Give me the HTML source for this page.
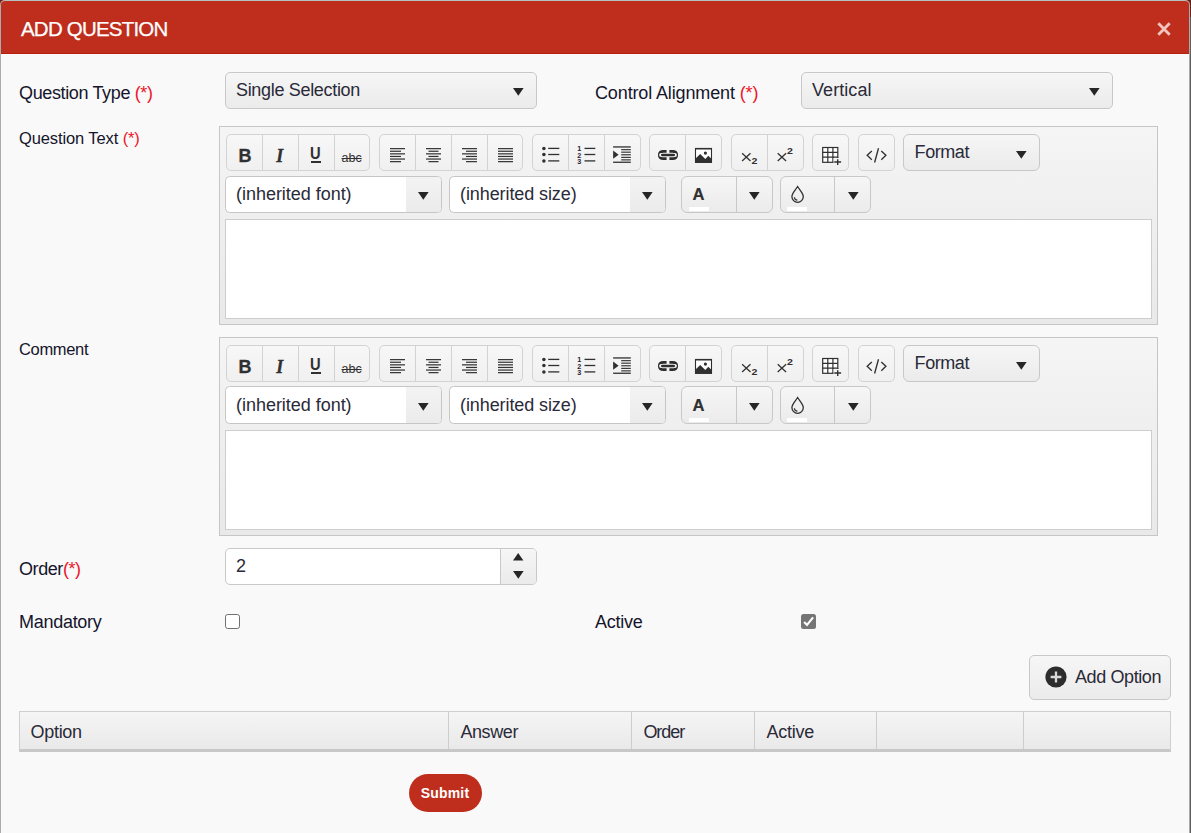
<!DOCTYPE html>
<html lang="en">
<head>
<meta charset="utf-8">
<title>Add Question</title>
<style>#title{letter-spacing:-0.80px}
#qtype{letter-spacing:-0.36px}
#ssel{letter-spacing:-0.32px}
#calign{letter-spacing:-0.13px}
#vert{letter-spacing:0.06px}
#qtext{letter-spacing:-0.11px}
#comment{letter-spacing:-0.33px}
#ifont,#ifont2{letter-spacing:-0.03px}
#isize,#isize2{letter-spacing:-0.09px}
#format,#format2{letter-spacing:-0.44px}
#order{letter-spacing:-0.43px}
#mand{letter-spacing:-0.28px}
#active{letter-spacing:-0.24px}
#addopt{letter-spacing:-0.40px}
#hopt{letter-spacing:-0.32px}
#hans{letter-spacing:-0.40px}
#hord{letter-spacing:-1.05px}
#hact{letter-spacing:-0.24px}
#submit{letter-spacing:0.16px}

*{box-sizing:border-box;margin:0;padding:0}
html,body{width:1191px;height:833px;overflow:hidden;background:linear-gradient(#66221a 17px,#5e5e60 17px);font-family:"Liberation Sans",sans-serif;color:#1b1b2f}
.abs{position:absolute}
#dlg{position:absolute;left:0;top:0;width:1190px;height:840px;background:#f9f9f9;border-radius:5px 5px 0 0;overflow:hidden}
#frame{position:absolute;left:0;top:0;width:1190px;height:840px;border:1px solid #a9abac;border-top-color:#b4c2c4;border-radius:5px 5px 0 0}
#hdr{position:absolute;left:0;top:0;width:1190px;height:54px;background:#bf2e1c;border-bottom:1px solid #b8200d}
#hdr .t{position:absolute;left:21px;top:17px;font-size:20.5px;line-height:24px;color:#fff;white-space:nowrap;-webkit-text-stroke:0.25px #fff}
.lbl{position:absolute;font-size:18px;line-height:22px;white-space:nowrap;color:#15152c}
.lbl.s{font-size:16.5px;line-height:20px}
.req{color:#ee1529}
.sel{position:absolute;height:37px;border:1px solid #c8c8c8;border-radius:5px;background:linear-gradient(#f6f6f6,#ebebeb);font-size:18px;line-height:22px;color:#2a2a38;white-space:nowrap}
.sel .t{position:absolute;left:10px;top:6px}
.dv{position:absolute;top:0;width:1px;height:100%;background:#c8c8c8}
.ed{position:absolute;left:219px;width:939px;height:199px;border:1px solid #c6c6c6;background:linear-gradient(#f5f5f5,#f0efef 45%,#eae9e9)}
.grp{position:absolute;height:37px;border:1px solid #d3d3d3;border-radius:5px;background:linear-gradient(#f7f7f7,#f0f0f0);overflow:hidden}
.grp i{position:absolute;top:0;width:1px;height:35px;background:#d2d2d2}
.tx{position:absolute;color:#303030;white-space:nowrap}
.cmb{position:absolute;height:37px;border:1px solid #c6c6c6;border-radius:4.5px;background:#fff;overflow:hidden;font-size:18px;line-height:22px;color:#2a2a38;white-space:nowrap}
.cmb .t{position:absolute;left:10px;top:6px}
.cmb b{position:absolute;right:0;top:0;width:35px;height:100%;background:linear-gradient(#f3f3f3,#ebebeb)}
.area{position:absolute;width:927px;height:100px;border:1px solid #cdcdcd;background:#fff}
.th{position:absolute;top:0;height:37px;border-left:1px solid #cdcdcd;font-size:18px;line-height:22px;color:#2a2a38;padding:9px 0 0 11.4px;white-space:nowrap}
</style>
</head>
<body>
<div id="dlg">
 <div id="hdr"><div class="t" id="title">ADD QUESTION</div>
  <svg class="abs" style="left:1156.4px;top:21.3px" width="16" height="16" viewBox="0 0 16 16"><path d="M2.3 2.3L13.7 13.7M13.7 2.3L2.3 13.7" stroke="#f2c5bf" stroke-width="2.8" fill="none"/></svg>
 </div>

 <div class="lbl" id="qtype" style="left:19px;top:82px">Question Type <span class="req">(*)</span></div>
 <div class="sel" style="left:225px;top:72px;width:312px"><span class="t" id="ssel">Single Selection</span><svg class="abs" style="left:286.20px;top:13.90px" width="12.6" height="9.8" viewBox="-1 -1 12.6 9.8"><path d="M0 0H10.6L5.3 7.8Z" fill="#262626"/></svg></div>
 <div class="lbl" id="calign" style="left:595px;top:82px">Control Alignment <span class="req">(*)</span></div>
 <div class="sel" style="left:801px;top:72px;width:312px"><span class="t" id="vert">Vertical</span><svg class="abs" style="left:286.20px;top:13.90px" width="12.6" height="9.8" viewBox="-1 -1 12.6 9.8"><path d="M0 0H10.6L5.3 7.8Z" fill="#262626"/></svg></div>

 <div class="lbl s" id="qtext" style="left:19px;top:128px">Question Text <span class="req">(*)</span></div>
 <div class="ed" style="top:126px">
  <div class="grp" style="left:6px;top:7px;width:144px"><i style="left:35px"></i><i style="left:71px"></i><i style="left:107px"></i></div>
  <div class="grp" style="left:159px;top:7px;width:144px"><i style="left:35px"></i><i style="left:71px"></i><i style="left:107px"></i></div>
  <div class="grp" style="left:312px;top:7px;width:109px"><i style="left:35px"></i><i style="left:71px"></i></div>
  <div class="grp" style="left:429px;top:7px;width:73px"><i style="left:35px"></i></div>
  <div class="grp" style="left:511px;top:7px;width:73px"><i style="left:35px"></i></div>
  <div class="grp" style="left:592px;top:7px;width:37px"></div>
  <div class="grp" style="left:638px;top:7px;width:37px"></div>
  <div class="tx" style="left:18.400000000000006px;top:18px;font-weight:bold;font-size:18px;line-height:22px;-webkit-text-stroke:0.3px #303030">B</div>
  <div class="tx" style="left:56.19999999999999px;top:17.599999999999994px;-webkit-text-stroke:0.3px #303030;font-family:'Liberation Serif',serif;font-weight:bold;font-style:italic;font-size:18px;line-height:22px">I</div>
  <div class="tx" style="left:90.39999999999998px;top:17.099999999999994px;font-size:16px;line-height:20px;font-weight:bold;transform:scaleX(0.92);transform-origin:0 0">U</div>
  <div class="abs" style="left:90.69999999999999px;top:34.30000000000001px;width:10.8px;height:1.6px;background:#303030"></div>
  <div class="tx" style="left:121.5px;top:22.80000000000001px;font-size:12.5px;line-height:16px;text-decoration:line-through">abc</div>
  <svg class="abs" style="left:0;top:0" width="700" height="50" viewBox="220 127 700 50" fill="#303030" stroke="none"><rect x="390" y="148.05" width="15" height="1.2"/><rect x="390" y="150.65" width="11" height="1.2"/><rect x="390" y="153.25" width="15" height="1.2"/><rect x="390" y="155.85" width="11" height="1.2"/><rect x="390" y="158.45" width="15" height="1.2"/><rect x="390" y="161.05" width="11" height="1.2"/><rect x="426" y="148.05" width="15" height="1.2"/><rect x="428.5" y="150.65" width="10.0" height="1.2"/><rect x="426" y="153.25" width="15" height="1.2"/><rect x="428.5" y="155.85" width="10.0" height="1.2"/><rect x="426" y="158.45" width="15" height="1.2"/><rect x="428.5" y="161.05" width="10.0" height="1.2"/><rect x="462" y="148.05" width="15" height="1.2"/><rect x="466" y="150.65" width="11" height="1.2"/><rect x="462" y="153.25" width="15" height="1.2"/><rect x="466" y="155.85" width="11" height="1.2"/><rect x="462" y="158.45" width="15" height="1.2"/><rect x="466" y="161.05" width="11" height="1.2"/><rect x="498" y="148.05" width="15" height="1.2"/><rect x="498" y="150.65" width="15" height="1.2"/><rect x="498" y="153.25" width="15" height="1.2"/><rect x="498" y="155.85" width="15" height="1.2"/><rect x="498" y="158.45" width="15" height="1.2"/><rect x="498" y="161.05" width="15" height="1.2"/><circle cx="543.9" cy="148.50" r="1.75"/><rect x="548.2" y="147.75" width="11.1" height="1.3"/><rect x="584.5" y="147.75" width="10.8" height="1.3"/><circle cx="543.9" cy="154.60" r="1.75"/><rect x="548.2" y="153.85" width="11.1" height="1.3"/><rect x="584.5" y="153.85" width="10.8" height="1.3"/><circle cx="543.9" cy="161.00" r="1.75"/><rect x="548.2" y="160.25" width="11.1" height="1.3"/><rect x="584.5" y="160.25" width="10.8" height="1.3"/><text x="577.2" y="151.4" font-family="Liberation Sans,sans-serif" font-weight="bold" font-size="7.2" fill="#2a2230">1</text><text x="577.2" y="157.7" font-family="Liberation Sans,sans-serif" font-weight="bold" font-size="7.2" fill="#2a2230">2</text><text x="577.2" y="164.0" font-family="Liberation Sans,sans-serif" font-weight="bold" font-size="7.2" fill="#2a2230">3</text><rect x="613.1" y="146.3" width="17.7" height="1.3"/><rect x="613.1" y="161.6" width="17.7" height="1.3"/><rect x="621.2" y="149.1" width="9.6" height="1.15"/><rect x="621.2" y="151.6" width="9.6" height="1.15"/><rect x="621.2" y="154.2" width="9.6" height="1.15"/><rect x="621.2" y="156.79999999999998" width="9.6" height="1.15"/><rect x="621.2" y="159.29999999999998" width="9.6" height="1.15"/><path d="M613.1 150.6L618.6 154.7L613.1 158.8Z"/><g fill="none" stroke="#2d2d2d" stroke-width="2.7"><path d="M666.6 151.3H663.4Q659.3 151.3 659.3 155T663.4 158.7H666.6"/><path d="M669.4 151.3H672.6Q676.7 151.3 676.7 155T672.6 158.7H669.4"/><path d="M661.2 155H674.8" stroke="#f6f6f6" stroke-width="4.2" stroke-linecap="round"/><path d="M662.2 155H673.8" stroke-width="2.4" stroke-linecap="round"/></g><rect x="695.5" y="148.6" width="16" height="13.8" fill="#fff" stroke="#2d2d2d" stroke-width="1.1"/><rect x="695" y="147.9" width="17" height="1.5"/><path d="M695.5 162.6V158.6L700.2 154L705.3 158.9L708.3 155.7L711.6 159V162.6Z"/><circle cx="705.4" cy="153.1" r="1.6"/><g fill="none" stroke="#303030" stroke-width="1.25"><path d="M742.1 153.2L750.5 161M750.5 153.2L742.1 161"/><path d="M777.7 153.2L786.1 161M786.1 153.2L777.7 161"/></g><text x="751.4" y="163.8" font-family="Liberation Sans,sans-serif" font-weight="bold" font-size="8.6" textLength="5.9" lengthAdjust="spacingAndGlyphs">2</text><text x="787" y="154" font-family="Liberation Sans,sans-serif" font-weight="bold" font-size="8.6" textLength="5.9" lengthAdjust="spacingAndGlyphs">2</text><g fill="none" stroke="#303030" stroke-width="1.2"><rect x="822.7" y="147.5" width="15.1" height="14.8" fill="#fff"/><path d="M827.8 147.5V162.3M832.9 147.5V162.3M822.7 152.4H837.8M822.7 157.2H837.8"/></g><rect x="833.6" y="158" width="8" height="7.4" fill="#f3f3f3"/><path d="M833.5 157.2V158M837.8 157.2V158" stroke="#303030" stroke-width="1.2"/><path d="M837 159.2h1.4v2.1h2.7v1.4h-2.7v2.2h-1.4v-2.2h-2.7v-1.4h2.7z"/><g fill="none" stroke="#303030" stroke-width="1.35"><path d="M871.8 151L867.2 155.35L871.8 159.7M881.3 151L885.9 155.35L881.3 159.7M878.5 148.3L874.6 162.5"/></g></svg>
  <div class="sel" style="left:683px;top:7px;width:137px;border-radius:6px"><span class="t" id="format" style="left:10.6px">Format</span><svg class="abs" style="left:111.20px;top:15.00px" width="12.6" height="9.8" viewBox="-1 -1 12.6 9.8"><path d="M0 0H10.6L5.3 7.8Z" fill="#262626"/></svg></div>
  <div class="cmb" style="left:5px;top:49px;height:37px;width:217px"><b></b><div class="abs" style="left:0;top:0px;right:0;height:35px"><span class="t" id="ifont">(inherited font)</span><svg class="abs" style="left:191.00px;top:14.10px" width="12.6" height="9.8" viewBox="-1 -1 12.6 9.8"><path d="M0 0H10.6L5.3 7.8Z" fill="#262626"/></svg></div></div>
  <div class="cmb" style="left:229px;top:49px;height:37px;width:217px"><b></b><div class="abs" style="left:0;top:0px;right:0;height:35px"><span class="t" id="isize">(inherited size)</span><svg class="abs" style="left:191.00px;top:14.10px" width="12.6" height="9.8" viewBox="-1 -1 12.6 9.8"><path d="M0 0H10.6L5.3 7.8Z" fill="#262626"/></svg></div></div>
  <div class="sel" style="left:461px;top:49px;height:37px;width:92px;border-radius:6px"><i class="dv" style="left:54px"></i><div class="abs" style="left:0;top:0px;right:0;height:35px"><span class="tx" style="left:10.4px;top:8px;font-weight:bold;font-size:16.6px;line-height:20px;-webkit-text-stroke:0.2px #303030">A</span><div class="abs" style="left:7px;top:30px;width:20px;height:4px;background:#fff"></div><svg class="abs" style="left:65.50px;top:14.00px" width="12.6" height="9.8" viewBox="-1 -1 12.6 9.8"><path d="M0 0H10.6L5.3 7.8Z" fill="#262626"/></svg></div></div>
  <div class="sel" style="left:560px;top:49px;height:37px;width:91px;border-radius:6px"><i class="dv" style="left:53px"></i><div class="abs" style="left:0;top:0px;right:0;height:35px"><svg class="abs" style="left:6.9px;top:7px" width="20" height="22" viewBox="0 0 20 22"><path d="M9.6 2.5C7.4 6 3.9 9.3 3.9 12.6a5.7 5.7 0 0 0 11.4 0C15.3 9.3 11.8 6 9.6 2.5Z" fill="none" stroke="#303030" stroke-width="1.3"/><path d="M6.4 13.2a3.1 3.1 0 0 0 3 2.9" fill="none" stroke="#303030" stroke-width="1.2"/></svg><div class="abs" style="left:6px;top:30px;width:20px;height:4px;background:#fff"></div><svg class="abs" style="left:65.50px;top:14.00px" width="12.6" height="9.8" viewBox="-1 -1 12.6 9.8"><path d="M0 0H10.6L5.3 7.8Z" fill="#262626"/></svg></div></div>
  <div class="area" style="left:5px;top:92px"></div>
 </div>

 <div class="lbl s" id="comment" style="left:19px;top:339px">Comment</div>
 <div class="ed" style="top:337px">
  <div class="grp" style="left:6px;top:7px;width:144px"><i style="left:35px"></i><i style="left:71px"></i><i style="left:107px"></i></div>
  <div class="grp" style="left:159px;top:7px;width:144px"><i style="left:35px"></i><i style="left:71px"></i><i style="left:107px"></i></div>
  <div class="grp" style="left:312px;top:7px;width:109px"><i style="left:35px"></i><i style="left:71px"></i></div>
  <div class="grp" style="left:429px;top:7px;width:73px"><i style="left:35px"></i></div>
  <div class="grp" style="left:511px;top:7px;width:73px"><i style="left:35px"></i></div>
  <div class="grp" style="left:592px;top:7px;width:37px"></div>
  <div class="grp" style="left:638px;top:7px;width:37px"></div>
  <div class="tx" style="left:18.400000000000006px;top:18px;font-weight:bold;font-size:18px;line-height:22px;-webkit-text-stroke:0.3px #303030">B</div>
  <div class="tx" style="left:56.19999999999999px;top:17.599999999999994px;-webkit-text-stroke:0.3px #303030;font-family:'Liberation Serif',serif;font-weight:bold;font-style:italic;font-size:18px;line-height:22px">I</div>
  <div class="tx" style="left:90.39999999999998px;top:17.099999999999994px;font-size:16px;line-height:20px;font-weight:bold;transform:scaleX(0.92);transform-origin:0 0">U</div>
  <div class="abs" style="left:90.69999999999999px;top:34.30000000000001px;width:10.8px;height:1.6px;background:#303030"></div>
  <div class="tx" style="left:121.5px;top:22.80000000000001px;font-size:12.5px;line-height:16px;text-decoration:line-through">abc</div>
  <svg class="abs" style="left:0;top:0" width="700" height="50" viewBox="220 127 700 50" fill="#303030" stroke="none"><rect x="390" y="148.05" width="15" height="1.2"/><rect x="390" y="150.65" width="11" height="1.2"/><rect x="390" y="153.25" width="15" height="1.2"/><rect x="390" y="155.85" width="11" height="1.2"/><rect x="390" y="158.45" width="15" height="1.2"/><rect x="390" y="161.05" width="11" height="1.2"/><rect x="426" y="148.05" width="15" height="1.2"/><rect x="428.5" y="150.65" width="10.0" height="1.2"/><rect x="426" y="153.25" width="15" height="1.2"/><rect x="428.5" y="155.85" width="10.0" height="1.2"/><rect x="426" y="158.45" width="15" height="1.2"/><rect x="428.5" y="161.05" width="10.0" height="1.2"/><rect x="462" y="148.05" width="15" height="1.2"/><rect x="466" y="150.65" width="11" height="1.2"/><rect x="462" y="153.25" width="15" height="1.2"/><rect x="466" y="155.85" width="11" height="1.2"/><rect x="462" y="158.45" width="15" height="1.2"/><rect x="466" y="161.05" width="11" height="1.2"/><rect x="498" y="148.05" width="15" height="1.2"/><rect x="498" y="150.65" width="15" height="1.2"/><rect x="498" y="153.25" width="15" height="1.2"/><rect x="498" y="155.85" width="15" height="1.2"/><rect x="498" y="158.45" width="15" height="1.2"/><rect x="498" y="161.05" width="15" height="1.2"/><circle cx="543.9" cy="148.50" r="1.75"/><rect x="548.2" y="147.75" width="11.1" height="1.3"/><rect x="584.5" y="147.75" width="10.8" height="1.3"/><circle cx="543.9" cy="154.60" r="1.75"/><rect x="548.2" y="153.85" width="11.1" height="1.3"/><rect x="584.5" y="153.85" width="10.8" height="1.3"/><circle cx="543.9" cy="161.00" r="1.75"/><rect x="548.2" y="160.25" width="11.1" height="1.3"/><rect x="584.5" y="160.25" width="10.8" height="1.3"/><text x="577.2" y="151.4" font-family="Liberation Sans,sans-serif" font-weight="bold" font-size="7.2" fill="#2a2230">1</text><text x="577.2" y="157.7" font-family="Liberation Sans,sans-serif" font-weight="bold" font-size="7.2" fill="#2a2230">2</text><text x="577.2" y="164.0" font-family="Liberation Sans,sans-serif" font-weight="bold" font-size="7.2" fill="#2a2230">3</text><rect x="613.1" y="146.3" width="17.7" height="1.3"/><rect x="613.1" y="161.6" width="17.7" height="1.3"/><rect x="621.2" y="149.1" width="9.6" height="1.15"/><rect x="621.2" y="151.6" width="9.6" height="1.15"/><rect x="621.2" y="154.2" width="9.6" height="1.15"/><rect x="621.2" y="156.79999999999998" width="9.6" height="1.15"/><rect x="621.2" y="159.29999999999998" width="9.6" height="1.15"/><path d="M613.1 150.6L618.6 154.7L613.1 158.8Z"/><g fill="none" stroke="#2d2d2d" stroke-width="2.7"><path d="M666.6 151.3H663.4Q659.3 151.3 659.3 155T663.4 158.7H666.6"/><path d="M669.4 151.3H672.6Q676.7 151.3 676.7 155T672.6 158.7H669.4"/><path d="M661.2 155H674.8" stroke="#f6f6f6" stroke-width="4.2" stroke-linecap="round"/><path d="M662.2 155H673.8" stroke-width="2.4" stroke-linecap="round"/></g><rect x="695.5" y="148.6" width="16" height="13.8" fill="#fff" stroke="#2d2d2d" stroke-width="1.1"/><rect x="695" y="147.9" width="17" height="1.5"/><path d="M695.5 162.6V158.6L700.2 154L705.3 158.9L708.3 155.7L711.6 159V162.6Z"/><circle cx="705.4" cy="153.1" r="1.6"/><g fill="none" stroke="#303030" stroke-width="1.25"><path d="M742.1 153.2L750.5 161M750.5 153.2L742.1 161"/><path d="M777.7 153.2L786.1 161M786.1 153.2L777.7 161"/></g><text x="751.4" y="163.8" font-family="Liberation Sans,sans-serif" font-weight="bold" font-size="8.6" textLength="5.9" lengthAdjust="spacingAndGlyphs">2</text><text x="787" y="154" font-family="Liberation Sans,sans-serif" font-weight="bold" font-size="8.6" textLength="5.9" lengthAdjust="spacingAndGlyphs">2</text><g fill="none" stroke="#303030" stroke-width="1.2"><rect x="822.7" y="147.5" width="15.1" height="14.8" fill="#fff"/><path d="M827.8 147.5V162.3M832.9 147.5V162.3M822.7 152.4H837.8M822.7 157.2H837.8"/></g><rect x="833.6" y="158" width="8" height="7.4" fill="#f3f3f3"/><path d="M833.5 157.2V158M837.8 157.2V158" stroke="#303030" stroke-width="1.2"/><path d="M837 159.2h1.4v2.1h2.7v1.4h-2.7v2.2h-1.4v-2.2h-2.7v-1.4h2.7z"/><g fill="none" stroke="#303030" stroke-width="1.35"><path d="M871.8 151L867.2 155.35L871.8 159.7M881.3 151L885.9 155.35L881.3 159.7M878.5 148.3L874.6 162.5"/></g></svg>
  <div class="sel" style="left:683px;top:7px;width:137px;border-radius:6px"><span class="t" id="format2" style="left:10.6px">Format</span><svg class="abs" style="left:111.20px;top:15.00px" width="12.6" height="9.8" viewBox="-1 -1 12.6 9.8"><path d="M0 0H10.6L5.3 7.8Z" fill="#262626"/></svg></div>
  <div class="cmb" style="left:5px;top:48px;height:38px;width:217px"><b></b><div class="abs" style="left:0;top:1px;right:0;height:35px"><span class="t" id="ifont2">(inherited font)</span><svg class="abs" style="left:191.00px;top:14.10px" width="12.6" height="9.8" viewBox="-1 -1 12.6 9.8"><path d="M0 0H10.6L5.3 7.8Z" fill="#262626"/></svg></div></div>
  <div class="cmb" style="left:229px;top:48px;height:38px;width:217px"><b></b><div class="abs" style="left:0;top:1px;right:0;height:35px"><span class="t" id="isize2">(inherited size)</span><svg class="abs" style="left:191.00px;top:14.10px" width="12.6" height="9.8" viewBox="-1 -1 12.6 9.8"><path d="M0 0H10.6L5.3 7.8Z" fill="#262626"/></svg></div></div>
  <div class="sel" style="left:461px;top:48px;height:38px;width:92px;border-radius:6px"><i class="dv" style="left:54px"></i><div class="abs" style="left:0;top:1px;right:0;height:35px"><span class="tx" style="left:10.4px;top:8px;font-weight:bold;font-size:16.6px;line-height:20px;-webkit-text-stroke:0.2px #303030">A</span><div class="abs" style="left:7px;top:30px;width:20px;height:4px;background:#fff"></div><svg class="abs" style="left:65.50px;top:14.00px" width="12.6" height="9.8" viewBox="-1 -1 12.6 9.8"><path d="M0 0H10.6L5.3 7.8Z" fill="#262626"/></svg></div></div>
  <div class="sel" style="left:560px;top:48px;height:38px;width:91px;border-radius:6px"><i class="dv" style="left:53px"></i><div class="abs" style="left:0;top:1px;right:0;height:35px"><svg class="abs" style="left:6.9px;top:7px" width="20" height="22" viewBox="0 0 20 22"><path d="M9.6 2.5C7.4 6 3.9 9.3 3.9 12.6a5.7 5.7 0 0 0 11.4 0C15.3 9.3 11.8 6 9.6 2.5Z" fill="none" stroke="#303030" stroke-width="1.3"/><path d="M6.4 13.2a3.1 3.1 0 0 0 3 2.9" fill="none" stroke="#303030" stroke-width="1.2"/></svg><div class="abs" style="left:6px;top:30px;width:20px;height:4px;background:#fff"></div><svg class="abs" style="left:65.50px;top:14.00px" width="12.6" height="9.8" viewBox="-1 -1 12.6 9.8"><path d="M0 0H10.6L5.3 7.8Z" fill="#262626"/></svg></div></div>
  <div class="area" style="left:5px;top:92px"></div>
 </div>

 <div class="lbl" id="order" style="left:19px;top:558px">Order<span class="req">(*)</span></div>
 <div class="sel" style="left:225px;top:548px;width:312px;background:#fff;overflow:hidden"><span class="t" id="two">2</span>
   <div class="abs" style="right:0;top:0;width:36px;height:35px;border-left:1px solid #c8c8c8;background:linear-gradient(#f6f6f6,#ebebeb)"></div>
   <svg class="abs" style="left:286.30px;top:3.10px" width="12.4" height="9.6" viewBox="-1 -1 12.4 9.6"><path d="M0 7.6H10.4L5.2 0Z" fill="#262626"/></svg><svg class="abs" style="left:286.20px;top:20.90px" width="12.6" height="9.8" viewBox="-1 -1 12.6 9.8"><path d="M0 0H10.6L5.3 7.8Z" fill="#262626"/></svg></div>

 <div class="lbl" id="mand" style="left:19px;top:611px">Mandatory</div>
 <div class="abs" style="left:225px;top:614px;width:15px;height:15px;border:1.5px solid #707070;border-radius:2.8px;background:#fff"></div>
 <div class="lbl" id="active" style="left:595px;top:611px">Active</div>
 <div class="abs" style="left:801px;top:614px;width:15px;height:15px;border-radius:2.5px;background:#757575">
  <svg class="abs" style="left:0;top:0" width="15" height="15" viewBox="0 0 15 15"><path d="M3.1 8L6 10.9L12.1 3.4" stroke="#fff" stroke-width="2.1" fill="none"/></svg></div>

 <div class="sel" style="left:1029px;top:655px;width:142px;height:45px"><span class="t" id="addopt" style="left:45px;top:10px">Add Option</span>
  <svg class="abs" style="left:15px;top:10px" width="22" height="22" viewBox="0 0 22 22"><circle cx="11" cy="11" r="10.6" fill="#2c2c2c"/><path d="M11 5.6V16.4M5.6 11H16.4" stroke="#d8d8d8" stroke-width="2.3"/></svg></div>

 <div class="abs" style="left:19px;top:711px;width:1152px;height:41px;border:1px solid #cfcfcf;border-bottom:3px solid #c8c8c8;background:linear-gradient(#f5f5f5,#eae9e9)">
  <div class="th" style="left:0;border-left:0;width:428px;padding-left:10.6px"><span id="hopt">Option</span></div>
  <div class="th" style="left:428px;width:183px"><span id="hans">Answer</span></div>
  <div class="th" style="left:611px;width:123px"><span id="hord">Order</span></div>
  <div class="th" style="left:734px;width:122px"><span id="hact">Active</span></div>
  <div class="th" style="left:856px;width:147px"></div>
  <div class="th" style="left:1003px;width:148px"></div>
 </div>

 <div class="abs" style="left:409px;top:774px;width:73px;height:37.6px;border-radius:19px;background:#bf2e1c;color:#fff;font-weight:bold;font-size:14px;line-height:18px;text-align:center;padding-top:9.6px;padding-right:1px"><span id="submit">Submit</span></div>
 <div id="frame"></div>
</div>
</body>
</html>
